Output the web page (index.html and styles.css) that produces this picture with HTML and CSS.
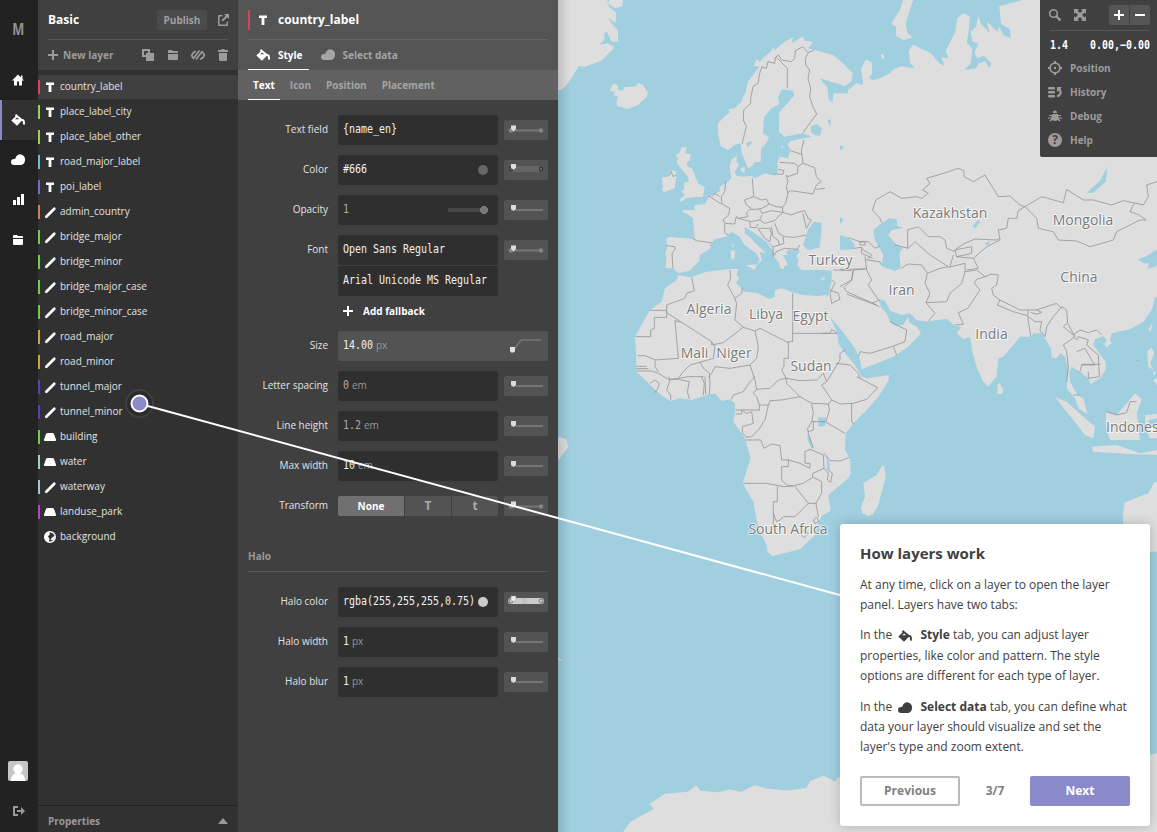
FILE: index.html
```html
<!DOCTYPE html>
<html lang="en">
<head>
<meta charset="utf-8">
<title>Basic – country_label</title>
<link rel="stylesheet" href="styles.css">
</head>
<body>
<svg class="sprite" aria-hidden="true">
  <symbol id="home" viewBox="0 0 18 18"><path d="M9 3.500 3 9.500h2v5h3v-4h2v4h3v-5h2L13.500 8V4.500H12v2z"/></symbol>
  <symbol id="paint" viewBox="0 0 18 18"><path fill-rule="evenodd" d="M7.200 3 9 4.800 13.200 8q2.500 0 2.700 3v2.500q-1.600.9-2-1V10.300L12.600 10 8 14.800 2.300 9.400 6.500 5.400 6 4.200zM6 8.300h4.200L8.200 6.400z"/></symbol>
  <symbol id="cloud" viewBox="0 0 18 18"><path d="M5 14a3 3 0 0 1 0-6q1.300 0 1.500-.7A4.700 4.700 0 0 1 16 9c0 3-2 5-5 5z"/></symbol>
  <symbol id="bars" viewBox="0 0 18 18"><path d="M4 9h3v5H4zM8 6h3v8H8zM12 3h3v11h-3z"/></symbol>
  <symbol id="folder" viewBox="0 0 18 18"><path d="M4 7V5q0-1 1-1h3l1 1h4q1 0 1 1v1zM4 8h10v5q0 1-1 1H5q-1 0-1-1z"/></symbol>
  <symbol id="logout" viewBox="0 0 18 18"><path d="M9 4H4v10h5v-2H6V6h3zM8 8h4V5l4 4-4 4v-3H8z"/></symbol>
  <symbol id="share" viewBox="0 0 18 18"><path d="M9 4H5Q4 4 4 5v9q0 1 1 1h8q1 0 1-1v-4l-1.500 1.500v2h-7v-8H8zM10 3h5v5l-1.800-1.800-4.400 4.400-1.400-1.400L11.800 4.800z"/></symbol>
  <symbol id="plus" viewBox="0 0 18 18"><path d="M8 4h2v4h4v2h-4v4H8v-4H4V8h4z"/></symbol>
  <symbol id="minus" viewBox="0 0 18 18"><path d="M4 8h10v2H4z"/></symbol>
  <symbol id="copy" viewBox="0 0 18 18"><path fill-rule="evenodd" d="M3 3h8v4h4v8H7v-4H3zM5 5v4h2V7h2V5z"/></symbol>
  <symbol id="hide" viewBox="0 0 18 18"><g fill="none" stroke="currentColor" stroke-width="1.700"><path d="M7 5.300Q3.500 6.500 2.700 9.500q.7 2 2 2.800M11 13.300q3.500-1.300 4.300-4.300-.5-1.700-1.700-2.700M10.500 4.500 4 13M13.500 5l-6.500 8.500"/></g></symbol>
  <symbol id="trash" viewBox="0 0 18 18"><path d="M4 4h3l1-1h2l1 1h3v2H4zM5 7h8v7q0 1-1 1H6q-1 0-1-1z"/></symbol>
  <symbol id="text" viewBox="0 0 18 18"><path d="M5 4.500h8V7h-2.600v7H7.600V7H5z"/></symbol>
  <symbol id="line" viewBox="0 0 18 18"><path d="M5.300 13.700 13.300 5.700" fill="none" stroke="currentColor" stroke-width="2.700" stroke-linecap="round"/></symbol>
  <symbol id="fill" viewBox="0 0 18 18"><path d="M6.500 5h5q1 0 1.500 1l2 5.500q.3 1.500-1 1.500H4q-1.300 0-1-1.500L5 6q.5-1 1.500-1z"/></symbol>
  <symbol id="globe" viewBox="0 0 18 18"><circle cx="9" cy="9" r="5.300" fill="none" stroke="currentColor" stroke-width="1.400"/><path d="M3.500 8.500 5 5l3-1.500 1 2.500-2 2.500 1.500 2.500L8 14.300Q4 13.500 3.500 8.500zM11.500 9l2.500-1-.5 3-2 1.500-2-1z"/></symbol>
  <symbol id="search" viewBox="0 0 18 18"><path d="m10 10 4.500 4.500" fill="none" stroke="currentColor" stroke-width="2.400"/><circle cx="7.500" cy="7.500" r="3.800" fill="none" stroke="currentColor" stroke-width="1.600"/></symbol>
  <symbol id="full" viewBox="0 0 18 18"><path d="M3 3h5L6.500 4.500 9 7l2.500-2.500L10 3h5v5l-1.500-1.500L11 9l2.500 2.500L15 10v5h-5l1.500-1.500L9 11l-2.500 2.500L8 15H3v-5l1.500 1.500L7 9 4.500 6.500 3 8z"/></symbol>
  <symbol id="target" viewBox="0 0 18 18"><circle cx="9" cy="9" r="4.900" fill="none" stroke="currentColor" stroke-width="1.800"/><circle cx="9" cy="9" r="1.200"/><path d="M8 2h2v3H8zM8 13h2v3H8zM2 8h3v2H2zM13 8h3v2h-3z"/></symbol>
  <symbol id="history" viewBox="0 0 18 18"><path d="M3 4h5q1 0 1 1.300T8 6.500H3q-1 0-1-1.200T3 4zM3 8h5q1 0 1 1.300t-1 1.200H3q-1 0-1-1.200T3 8zM3 12h5q1 0 1 1.300t-1 1.200H3q-1 0-1-1.200T3 12z"/><path d="M11 4h5l-1.500 1.700Q18 11 11.800 14.500l-1.200-1.700Q15 10.500 12.800 7.500L11 9z"/></symbol>
  <symbol id="bug" viewBox="0 0 18 18"><path d="M7 6a2 2.400 0 0 1 4 0zM6 7h6v1h3v1h-2.500v1.500H16v1h-3.500l2 2-1 1-2-1.500q-2.500 2-5 0l-2 1.500-1-1 2-2H2v-1h3.500V9H3V8h3z"/></symbol>
  <symbol id="fn-bar" viewBox="0 0 44 20"><path d="M7 10h32" stroke="#767676" stroke-width="2"/><path d="M7 5h5v3.500L9.500 11 7 8.500z" fill="#ddd"/></symbol>
  <symbol id="fn-dots" viewBox="0 0 44 20"><path d="M7 10.500h30" stroke="#767676" stroke-width="2"/><circle cx="7" cy="10.500" r="2.300" fill="#858585"/><circle cx="37" cy="10.500" r="2.300" fill="#858585"/><path d="M7 5.500h5V9l-2.500 2.500L7 9z" fill="#ddd"/></symbol>
</svg>

<div class="app">
  <nav class="rail">
    <div class="rail-item logo">M</div>
    <div class="rail-item first"><svg class="icon"><use href="#home"/></svg></div>
    <div class="rail-item active"><svg class="icon"><use href="#paint"/></svg></div>
    <div class="rail-item"><svg class="icon"><use href="#cloud"/></svg></div>
    <div class="rail-item"><svg class="icon"><use href="#bars"/></svg></div>
    <div class="rail-item"><svg class="icon"><use href="#folder"/></svg></div>
    <div class="rail-end">
      <svg class="avatar" viewBox="0 0 20 20"><rect width="20" height="20" rx="2" fill="#c6c6c6"/><circle cx="10" cy="8" r="4.700" fill="#fff"/><path d="M3 20q0-8 7-8t7 8z" fill="#fff"/></svg>
      <svg class="icon dim"><use href="#logout"/></svg>
    </div>
  </nav>

  <aside class="layers">
    <header class="layers-head">
      <div class="title-row"><h1>Basic</h1><button class="publish">Publish</button><svg class="icon"><use href="#share"/></svg></div>
      <div class="tool-row"><svg class="icon plus"><use href="#plus"/></svg><b>New layer</b>
        <div class="tools"><svg class="icon"><use href="#copy"/></svg><svg class="icon"><use href="#folder"/></svg><svg class="icon"><use href="#hide"/></svg><svg class="icon"><use href="#trash"/></svg></div>
      </div>
    </header>
    <ul class="layer-list">
      <li class="red selected"><svg class="icon"><use href="#text"/></svg>country_label</li>
      <li class="lime"><svg class="icon"><use href="#text"/></svg>place_label_city</li>
      <li class="lime"><svg class="icon"><use href="#text"/></svg>place_label_other</li>
      <li class="cyan"><svg class="icon"><use href="#text"/></svg>road_major_label</li>
      <li class="violet"><svg class="icon"><use href="#text"/></svg>poi_label</li>
      <li class="coral"><svg class="icon"><use href="#line"/></svg>admin_country</li>
      <li class="green"><svg class="icon"><use href="#line"/></svg>bridge_major</li>
      <li class="green"><svg class="icon"><use href="#line"/></svg>bridge_minor</li>
      <li class="green"><svg class="icon"><use href="#line"/></svg>bridge_major_case</li>
      <li class="green"><svg class="icon"><use href="#line"/></svg>bridge_minor_case</li>
      <li class="amber"><svg class="icon"><use href="#line"/></svg>road_major</li>
      <li class="amber"><svg class="icon"><use href="#line"/></svg>road_minor</li>
      <li class="indigo"><svg class="icon"><use href="#line"/></svg>tunnel_major</li>
      <li class="indigo"><svg class="icon"><use href="#line"/></svg>tunnel_minor</li>
      <li class="green"><svg class="icon"><use href="#fill"/></svg>building</li>
      <li class="mint"><svg class="icon"><use href="#fill"/></svg>water</li>
      <li class="ice"><svg class="icon"><use href="#line"/></svg>waterway</li>
      <li class="magenta"><svg class="icon"><use href="#fill"/></svg>landuse_park</li>
      <li><svg class="icon"><use href="#globe"/></svg>background</li>
    </ul>
    <footer class="properties"><b>Properties</b><i class="caret"></i></footer>
  </aside>

  <section class="panel">
    <header class="panel-head">
      <div class="panel-title"><svg class="icon"><use href="#text"/></svg><h2>country_label</h2></div>
      <div class="tabs"><b class="on"><svg class="icon"><use href="#paint"/></svg>Style</b><b><svg class="icon"><use href="#cloud"/></svg>Select data</b></div>
    </header>
    <div class="subtabs"><b class="on">Text</b><b>Icon</b><b>Position</b><b>Placement</b></div>
    <div class="form">
      <div class="row"><label>Text field</label><div class="input"><span class="mono"><i>{name_en}</i></span></div><svg class="fn"><use href="#fn-dots"/></svg></div>
      <div class="row"><label>Color</label><div class="input"><span class="mono"><i>#666</i></span><em class="swatch"></em></div>
        <svg class="fn" viewBox="0 0 44 20"><path d="M8 6h27v6H8z" fill="#666"/><path d="M5.500 7.500h3v3h-3zM35.500 7.500h3v3h-3z" fill="#666" stroke="#353535"/><path d="M7 4h5v3.500L9.500 10 7 7.500z" fill="#ddd"/></svg></div>
      <div class="row"><label>Opacity</label><div class="input faint"><span class="mono"><i>1</i></span><div class="slider"></div></div><svg class="fn"><use href="#fn-bar"/></svg></div>
      <div class="row"><label>Font</label><div class="input"><span class="mono"><i>Open Sans Regular</i></span></div><svg class="fn"><use href="#fn-dots"/></svg></div>
      <div class="row second"><label></label><div class="input"><span class="mono"><i>Arial Unicode MS Regular</i></span></div></div>
      <div class="add"><svg class="icon"><use href="#plus"/></svg><b>Add fallback</b></div>
      <div class="row"><label>Size</label><div class="input wide"><span class="mono fit" style="--n:5"><i>14.00</i></span><small>px</small>
        <svg class="curve" viewBox="0 0 44 20"><path d="M9 16 18 4h20" fill="none" stroke="#777" stroke-width="1.500"/><path d="M7 11h5v4l-1 1.500H8L7 15z" fill="#e2e2e2"/></svg></div></div>
      <div class="row"><label>Letter spacing</label><div class="input faint"><span class="mono fit" style="--n:1"><i>0</i></span><small>em</small></div><svg class="fn"><use href="#fn-bar"/></svg></div>
      <div class="row"><label>Line height</label><div class="input faint"><span class="mono fit" style="--n:3"><i>1.2</i></span><small>em</small></div><svg class="fn"><use href="#fn-bar"/></svg></div>
      <div class="row"><label>Max width</label><div class="input"><span class="mono fit" style="--n:2"><i>10</i></span><small>em</small></div><svg class="fn"><use href="#fn-bar"/></svg></div>
      <div class="row"><label>Transform</label><div class="segments"><b class="on">None</b><b class="case">T</b><b class="case">t</b></div><svg class="fn"><use href="#fn-dots"/></svg></div>
      <h3>Halo</h3>
      <div class="row"><label>Halo color</label><div class="input"><span class="mono"><i>rgba(255,255,255,0.75)</i></span><em class="swatch light"></em></div>
        <svg class="fn" viewBox="0 0 44 20"><rect x="4" y="6" width="36" height="6" rx="3" fill="#ccc"/><path d="M18 6h5v6h-5z" fill="#c2c2c2"/><circle cx="7" cy="9" r="2" fill="none" stroke="#777"/><circle cx="37" cy="9" r="2" fill="none" stroke="#777"/><path d="M7 4h5v3.500L9.500 10 7 7.500z" fill="#eee" stroke="#888" stroke-width=".5"/></svg></div>
      <div class="row"><label>Halo width</label><div class="input"><span class="mono fit" style="--n:1"><i>1</i></span><small>px</small></div><svg class="fn"><use href="#fn-bar"/></svg></div>
      <div class="row"><label>Halo blur</label><div class="input"><span class="mono fit" style="--n:1"><i>1</i></span><small>px</small></div><svg class="fn"><use href="#fn-bar"/></svg></div>
    </div>
  </section>

  <main class="map">
    <svg class="world" viewBox="558 0 599 832">
      <!-- Arctic coast and southern land -->
      <g transform="translate(558 0) scale(.38202 .53061)" class="land">
        <path d="M700 215 735 208 760 185 785 165 800 160 793 130 805 112 822 118 822 140 808 152 835 150 865 140 880 130 900 125 925 128 935 127 922 120 918 95 930 84 950 92 975 100 1000 120 1012 124 1003 108 1022 110 1015 95 1040 60 1045 35 1060 25 1078 30 1075 60 1070 80 1085 92 1080 120 1065 130 1050 155 1075 158 1090 135 1100 120 1120 115 1128 130 1135 120 1115 105 1098 110 1090 100 1100 82 1085 78 1080 60 1095 50 1100 30 1108 45 1130 62 1122 40 1150 60 1155 50 1165 66 1185 72 1183 55 1160 45 1155 12 1215 0H1568V560H700z"/>
        <path d="M903 0 895 20 880 35 872 45 885 50 885 68 905 76 928 70 915 62 910 45 918 25 930 0zM845 104 850 101 855 108 848 112z"/>
        <path d="M170 1568 190 1548 250 1525 240 1515 280 1496 340 1492 362 1480 372 1490 415 1493 450 1488 480 1492 515 1480 545 1486 600 1490 650 1485 660 1472 695 1462 725 1473 735 1464 760 1480V1568zM760 1400H1568V1568H760zM1479 970 1483 947 1525 935 1545 930 1560 910 1568 908V1040H1479zM0 823 22 828 27 843 0 868zM0 1240 15 1245 0 1244z"/>
      </g>
      <path class="water" d="M1149 690h8v63l-8 2z"/>
      <!-- Europe and the North Atlantic -->
      <g transform="translate(558 0) scale(.33333)">
        <g class="land">
          <path d="M0 0H195L193 18 172 25 148 10 155 0H148L152 20 175 38 172 68 147 50 143 35 160 70 175 85 180 95V125H160L148 97H140L138 120 125 134 150 130 170 142 130 182 80 200 63 198 30 250 10 270H0z"/>
          <path d="M165 252 180 255 180 270 195 272 198 262 235 258 240 248 255 255 270 278 265 292 240 315 208 327 178 318 175 310 180 290 165 285 172 275 155 272z"/>
          <path d="M370 442 387 442 382 460 399 463 395 480 385 492 390 500 402 505 420 550 440 562 435 590 405 592 385 595 370 605 362 600 375 590 382 585 370 575 378 568 378 548 392 545 390 530 378 515 365 500 355 485 360 478 353 465 365 458zM335 512 352 513 355 525 350 565 318 577 312 570 315 560 312 532 330 530z"/>
          <path d="M325 715 335 711 410 717 405 655 385 640 373 637 375 630 410 630 410 615 440 612 455 588 485 575 485 560 510 545 520 535 515 500 520 480 537 467 535 485 543 495 530 515 535 527 555 530 580 527 590 535 620 520 650 527 660 515 658 490 665 470 690 475 697 450 688 432 700 422 760 410 735 400 680 410 663 395V340L670 330 708 287 705 272 672 268 660 292 665 312 640 325 618 352 615 400 633 412 625 430 610 445 608 485 590 487 575 505 568 500 550 455 548 430 530 435 510 450 488 438 480 400V370L498 352 515 337 512 328 530 325 550 305 555 290 562 280 570 245 592 215 605 200 588 198 595 178 605 185 615 175 640 153 645 140 650 150 680 125 705 112 700 130 718 120 735 108 740 122 765 125 750 145 790 155 825 165 855 190 885 220 880 245 860 258 785 235 808 262 812 300 845 318 850 305 835 292 868 300 870 270 895 250 915 255 918 190 942 192 940 215 925 230 945 240 1300 200V850H920L830 810 800 818 735 815 718 795 722 780 715 768 725 755 720 745 700 750 690 750 685 755 690 765 675 765 690 795 680 797 677 808 667 805 663 790 648 770 650 760 625 725 590 700 575 690 560 680 560 700 580 715 592 730 625 760 605 755 612 780 597 795 605 780 595 760 560 735 545 710 520 695 505 710 470 718 455 735 458 745 425 765 425 782 395 812 362 820 345 805 322 805 325 775 322 760 328 740z"/>
          <path d="M563 796 597 793 590 810zM518 752 530 750 530 775 520 780zM525 725 528 740 523 742zM548 505 560 500 560 517 550 515zM785 836 803 831 795 840zM672 435 677 445 670 445z"/>
        </g>
        <g class="water">
          <path d="M735 735 745 705 750 690 768 665 790 668 795 690 810 697 825 685 818 675 855 655 850 680 838 690 870 715 890 740 860 748 800 737 765 748 750 750zM760 378 775 372 792 385 785 408 770 405 758 395zM808 360 822 358 832 378 820 388zM845 438 852 435 858 445 850 452zM565 430 578 422 582 430 568 442zM945 695 960 678 980 680 980 720 960 715z"/>
        </g>
        <path class="land" d="M790 680 805 670 818 682 805 697z"/>
        <g class="border">
          <path d="M552 432 560 400 565 380 556 360 557 330 578 310 578 295 585 260 600 250 605 220 612 200 625 205 630 185 650 190 652 172 662 165 670 180 690 183 700 185 710 175 712 152 735 140 750 158 768 150M655 172 688 205 688 265M750 160 742 175 743 195 755 210 750 235 758 265 755 290 765 320 776 342 735 398"/>
          <path d="M738 420 730 450 735 490 720 500 710 490 665 487M697 452 730 463M650 522 675 523 678 512 662 508M720 500 718 520 690 530 685 525 690 545 685 560 690 580 683 610 673 622M735 490 770 503 775 530 790 545 775 555 765 582 700 572 688 578M775 568 803 565 808 585 835 598 870 612 872 630 855 650M583 535 587 588M587 590 560 600 565 615 580 625M587 590 610 600 625 597 633 612 612 625 595 628 575 628 565 640 570 650 540 655 535 648M633 612 655 620 673 622 675 637 640 632 612 640 605 628M675 637 665 645 650 662 620 670 605 660 612 645M540 655 560 660 580 665 605 660M675 637 700 645 720 637 740 632 750 655 760 660 745 685 735 640M650 670 662 700 680 710 710 712 745 705M575 665 577 682 595 683 600 672M600 685 620 715 635 725 640 700 635 685 603 685M640 680 645 710 660 720 665 735 645 740 635 730M665 735 678 730 675 710M650 765 655 755 680 745 718 748 725 735M645 740 645 770M503 545 500 575 490 590 492 612 515 625 512 645 495 660 500 670 530 672 535 650M452 588 490 612M462 590 470 580 485 590M500 672 500 698 510 705M405 715 415 722 460 728M325 737 350 740 352 747 342 760 345 805M332 528 340 515 345 530 355 525M832 678V690M800 680 815 672"/>
          <path d="M870 715 915 720 940 735 960 730M885 742 905 742 915 755 945 760M905 727H920V735H905zM910 755 915 770 945 780 960 770M830 810 885 810 882 840 822 872M885 808 925 805 920 780 945 782M925 805 940 830 935 850 960 890M822 855 828 875 820 900M838 880 855 860 890 875 915 900M945 640 950 600 960 598"/>
        </g>
      </g>
      <!-- Asia -->
      <g transform="translate(840 140) scale(.33333)">
        <g class="land">
          <path d="M-20 -140H960V375L935 400 910 415 942 438 943 480 935 510 910 545 870 568 815 580 810 600 815 608 800 623 793 612 800 600 790 588 765 598 760 615 785 650 797 665 797 690 780 715 752 733 745 715 720 695 695 680 688 700 690 725 712 765 730 775 742 822 715 805 705 775 680 745 685 690 675 650 660 640 650 655 635 652 633 625 605 580 580 580 572 590 540 590 520 615 490 650 475 655 470 710 443 740 428 722 410 680 398 640 390 590 370 598 350 578 365 562 345 557 320 537 290 540 260 545 230 540 210 520 185 525 150 512 135 482 115 478 122 500 140 520 150 545 165 557 190 555 205 530 208 548 230 560 243 580 205 620 160 650 65 688 60 660 45 625 0 565 -30 530 -60 480 -70 430z"/>
          <path d="M473 735 478 728 490 748 485 763 472 762zM645 772 680 785 730 830 765 860 760 895 735 885 700 840zM925 570 938 545 933 575zM922 632 935 623 943 640 930 670 940 690 925 680zM798 815 830 825 860 790 885 760 905 778 890 820 895 850 900 900H810L798 860zM915 825 951 822V835L925 840 930 860 951 870V895H930L915 860zM755 920 830 915 900 940 951 930 951 945 870 942 760 935z"/>
          <path d="M950 700 940 705 940 692zM940 720 951 715V735z"/>
        </g>
        <g class="water">
          <path d="M942 333 920 348 893 358 910 370 928 370 922 387 945 380 960 370V325zM803 78 797 125 760 158 740 158 780 122zM100 270 125 250 148 235 170 238 172 258 190 263 155 270 145 285 165 310 188 325 178 340 182 385 165 393 125 378 130 345 105 300zM398 258 415 240 420 245 405 265zM435 310 450 303 448 313 438 315zM0 232 10 238 5 250 0 250zM0 15 12 22 5 30 0 28zM0 285 25 293 45 315 40 328 0 330zM765 790 780 860 790 900 770 860z"/>
        </g>
        <g class="border">
          <path d="M125 248 120 235 97 210 108 180 150 155 185 175 230 170 245 175 265 160 248 150 270 130 260 115 310 100 355 85 372 92 372 110 400 125 435 105 475 170 510 168 540 195 555 200 535 212 530 235 505 235 500 265 475 270 480 300 440 320 400 355 350 350 345 330 370 312 405 297 470 300 478 295M203 325V270L235 260 265 290 300 290 315 300 320 325 345 335M183 385 205 372 245 375 262 400 300 385 325 380 270 345 225 305 205 325 165 315M325 382 375 370 375 395 365 430 330 460 320 485 258 488 270 460 255 430 262 400M340 345 330 380M345 330 395 320 395 340 350 350M400 355 415 385 380 390M258 488 285 520 265 543M375 395 410 390 435 410 410 418 403 430 420 450 383 505 355 518 370 553 345 555M435 410 455 402 475 405 470 435 455 445 460 465 480 480 540 510 590 510 605 517 590 523 572 517M480 480 472 495 520 515 563 527 565 510M563 527 565 545 573 590M565 530 585 545 605 545 600 570 615 590 620 560 640 530 665 500 680 510 683 550 705 590 670 615 680 635 685 680 680 725M590 510 650 490 665 505M680 550 670 560 700 585 720 570 745 578 770 570 785 585M700 590 710 600 715 590 745 600 740 615 775 645 778 710 745 715 745 695M710 635 735 625 755 660 765 675 725 675 720 695M725 673H780M555 200 605 170 670 188 680 148 730 180 760 180 815 195 850 182 910 195 925 170 920 135 951 125M883 190 870 215 898 225 918 240 900 240 830 275 820 300 750 320 710 303 655 300 640 275 595 265 590 235 555 200M55 650 60 635 90 640 155 620 195 605 200 570 150 545M160 620 170 645M25 293 60 305 85 305 105 325 120 318M60 305H75V315H60zM40 325 65 322 70 330 95 345 80 360 120 365 125 375M65 325 65 340 98 355M75 350 80 390 95 420 85 435 115 480M0 388 80 387M40 390 35 420 0 440M0 455 95 490 120 480M95 490 118 500M700 765H718M798 815 830 825 860 818 870 785 890 785M890 660 895 663M0 640 45 680 60 710M45 700 113 743 80 775 0 795M40 795 35 840"/>
        </g>
      </g>
      <!-- Africa -->
      <g transform="translate(600 250) scale(.33333)">
        <path class="water" d="M560 60 670 60 695 62 695 90 685 135 680 165 640 165z"/>
        <path class="land" d="M660 87 672 81 677 84 668 91z"/>
        <path class="land" d="M235 75 272 82 320 65 390 57 415 57 410 75 417 85 408 100 425 115 430 125 470 128 510 148 523 140 525 120 545 115 580 128 610 135 655 138 680 134 688 155 690 178 673 177 690 200 712 250 715 280 735 310 765 345 785 380 800 385 867 375 865 392 835 440 800 480 762 518 737 550 735 600 750 625 752 670 745 685 685 735 692 782 665 798 655 820 645 855 600 898 518 918 502 905 500 885 478 840 468 800 460 755 428 700 452 625 435 565 400 515 405 485 405 460 390 448 365 453 347 432 325 432 300 442 275 450 240 445 212 453 190 440 150 405 130 385 110 365 108 310 105 260 150 180 185 155 195 115 230 90z"/>
        <path class="land" d="M688 135 700 128 740 120 740 190 700 190 695 165 692 178z"/>
        <path class="land" d="M848 645 853 648 857 680 835 765 820 792 805 798 787 790 783 770 795 740 790 700 830 675z"/>
        <path class="water" d="M655 502 678 503 675 528 655 530zM623 550 640 595 635 595 623 570zM680 612 688 640 690 660 682 655z"/>
        <g class="border">
          <path d="M275 83 283 122 260 130 255 145 200 165 200 188 335 275 335 285 370 278 430 232 405 210 410 160 402 140 383 105 392 85 390 60M430 232 465 243 480 235 565 278 565 275H578V130M427 112 425 130 405 145M150 181H200V202H163V235L152 240V260H107M242 217 225 212 235 325 165 330 135 317H112M335 275 345 290 340 325 300 337 270 345 250 365 235 385 210 388 205 380M465 243 475 290 470 325 450 345 390 355 345 350 335 370 325 380M578 250H712M712 250 695 238 690 250H668M565 278V325H552V350L545 360 558 385 600 392 650 390 670 370 680 395 720 330 720 310 735 300M708 340 750 345 775 370 780 385M770 380 833 413 800 448 760 460 720 462 695 450 665 405 680 395M755 460V515L762 522M558 385 535 390 510 415 470 418 465 390 450 345M558 385 560 400 600 440 635 460 685 462 695 450M600 440 545 450 510 452 505 465 478 465 470 440 460 430 470 418M395 448 400 435 430 425 450 395 465 380M478 480H407M478 465 478 482M407 492H425V480M425 480 440 490 455 485 460 520 427 530V550L440 560M505 465 495 510 475 540 455 560 437 562M437 570 482 570 492 595 515 582 540 587 545 630H565L600 640 630 655 630 640 615 640V605L630 598 670 615 672 655M635 462 640 490 635 515H675L735 550M685 462 688 480 678 515M635 515 623 535 625 550 640 595M640 515V540L625 545M672 610 690 632 720 633 748 622M672 655 638 670 638 682 610 700 580 708 560 705 545 690V650H565V628M672 655 685 670 682 690 692 697 697 670 680 655M640 682 665 695V730L648 760 625 760 585 710M648 760 655 800M430 700H500L550 710 580 708M532 710V755H520V830M625 760 585 800 550 800 540 810 530 815 520 790M640 810 650 802 657 815 645 820zM600 850 612 840 625 850 612 863zM110 349H140M110 356H145M110 363H155L175 370 200 385 210 390 200 420 212 435 212 450M165 332V350L175 365M150 400 165 390 178 400 172 420 162 428M210 388 235 388 268 395 262 425 268 447M265 380H310M300 335 310 355 330 370M305 380 313 400 310 435M315 380 317 432M328 370 330 400 328 432M235 385 265 380M700 60 755 62M697 90 705 98 690 130 695 160 720 148 715 130 690 120M730 110 740 125 830 165M735 110 755 90 760 60 795 57"/>
        </g>
      </g>
      <g class="places">
        <text x="950" y="218">Kazakhstan</text><text x="1083" y="225">Mongolia</text><text x="1079" y="282">China</text><text x="830.500" y="265">Turkey</text><text x="901.500" y="295">Iran</text><text x="709" y="314">Algeria</text><text x="766" y="319">Libya</text><text x="810.500" y="321">Egypt</text><text x="694.500" y="358">Mali</text><text x="734" y="358">Niger</text><text x="811" y="371">Sudan</text><text x="991.500" y="339">India</text><text x="788" y="534">South Africa</text><text x="1106" y="432" class="start">Indones</text>
      </g>
    </svg>

    <div class="controls">
      <div class="control-top"><svg class="icon"><use href="#search"/></svg><svg class="icon"><use href="#full"/></svg>
        <div class="zoom"><span><svg class="icon"><use href="#plus"/></svg></span><span><svg class="icon"><use href="#minus"/></svg></span></div></div>
      <div class="coords"><span class="mono fit" style="--n:3"><i>1.4</i></span><span class="mono fit" style="--n:10"><i>0.00,−0.00</i></span></div>
      <div class="control"><svg class="icon"><use href="#target"/></svg>Position</div>
      <div class="control"><svg class="icon"><use href="#history"/></svg>History</div>
      <div class="control"><svg class="icon"><use href="#bug"/></svg>Debug</div>
      <div class="control"><span class="help">?</span>Help</div>
    </div>
  </main>
</div>

<svg class="pointer" viewBox="0 0 1157 832"><circle cx="139.500" cy="403.500" r="13.500" fill="#2b2b2b" stroke="#3f3f3f" stroke-width="2"/><path d="M146 405.500 845 596.500" stroke="#fff" stroke-width="2"/><circle cx="139.500" cy="403.500" r="8" fill="#8a8aca" stroke="#fff" stroke-width="2"/></svg>

<div class="tour">
  <h2>How layers work</h2>
  <p>At any time, click on a layer to open the layer panel. Layers have two tabs:</p>
  <p>In the <svg class="icon"><use href="#paint"/></svg> <b>Style</b> tab, you can adjust layer properties, like color and pattern. The style options are different for each type of layer.</p>
  <p>In the <svg class="icon"><use href="#cloud"/></svg> <b>Select data</b> tab, you can define what data your layer should visualize and set the layer's type and zoom extent.</p>
  <div class="tour-nav"><button class="prev">Previous</button><b>3/7</b><button class="next">Next</button></div>
</div>
</body>
</html>
```
FILE: styles.css
```css
* { box-sizing: border-box; }
body { margin: 0; width: 1157px; height: 832px; overflow: hidden; position: relative; font: 10px/20px "Open Sans", "Noto Sans", sans-serif; color: #e2e2e2; background: #404040; }
h1, h2, h3, p, ul { margin: 0; padding: 0; }
button { font: inherit; font-weight: 700; padding: 0; border: 0; }
.sprite { position: absolute; width: 0; height: 0; }
.icon { width: 18px; height: 18px; fill: currentColor; flex: none; display: block; }
.app { display: flex; height: 832px; }

.rail { width: 38px; background: #222; color: #fff; display: flex; flex-direction: column; }
.rail-item { height: 40px; padding-right: 2px; display: flex; align-items: center; justify-content: center; }
.rail-item.logo { height: 60px; padding-bottom: 2px; color: #929292; font: 700 16px/58px "Noto Sans", sans-serif; transform: scaleX(.8); }
.rail-item.active { background: #313131; border-left: 2px solid #8a8aca; padding-right: 4px; }
.rail-end { margin-top: auto; padding: 0 0 12px 8px; display: flex; flex-direction: column; gap: 21px; }
.rail-end .icon { margin-left: 1px; }
.avatar { width: 20px; height: 20px; display: block; }
.dim { color: #999; }

.layers { width: 200px; background: #313131; display: flex; flex-direction: column; }
.layers-head { height: 70px; background: #404040; padding: 0 10px; color: #9c9c9c; }
.title-row { height: 40px; border-bottom: 1px solid #565656; display: flex; align-items: center; }
.title-row h1 { font-size: 12px; color: #fff; flex: 1; }
.title-row .icon { margin-right: -4px; }
.publish { width: 50px; height: 20px; background: #4b4b4b; color: #a0a0a0; border-radius: 2px; margin: 1px 7px 0 0; line-height: 20px; }
.tool-row { height: 30px; display: flex; align-items: center; }
.tool-row b { padding-bottom: 1px; }
.tool-row .plus { margin: 0 1px 0 -4px; }
.tools { display: flex; gap: 7px; margin: 0 -4px 0 auto; }
.layer-list { list-style: none; margin-top: 5px; flex: 1; }
.layer-list li { height: 25px; padding: 0 0 3px 3px; display: flex; align-items: center; gap: 1px; background: linear-gradient(var(--c), var(--c)) 0 5px / 2px 14px no-repeat; --c: transparent; }
.layer-list .icon { color: #fff; margin-top: 2px; }
.layer-list .selected { box-shadow: inset 0 -1px #313131; background-color: #404040; }
.layer-list .red { --c: #d84550; } .layer-list .lime { --c: #a8cc56; } .layer-list .cyan { --c: #70bccc; }
.layer-list .violet { --c: #7768ce; } .layer-list .coral { --c: #cd7d64; } .layer-list .green { --c: #70cc4d; }
.layer-list .amber { --c: #cea33e; } .layer-list .indigo { --c: #5541bd; } .layer-list .mint { --c: #a2cfbf; }
.layer-list .ice { --c: #a2c9d0; } .layer-list .magenta { --c: #b347cc; }
.properties { height: 27px; padding: 5px 10px 0; border-top: 1px solid #222; color: #999; display: flex; align-items: center; justify-content: space-between; }
.properties b { padding-bottom: 2px; }
.caret { border: 5px solid transparent; border-top: 0; border-bottom: 6px solid #999; margin-bottom: 1px; }

.panel { width: 320px; background: #404040; }
.panel-head { height: 70px; background: #545454; padding: 0 10px; }
.panel-title { height: 40px; border-bottom: 1px solid #676767; display: flex; align-items: center; gap: 6px; padding-left: 6px; color: #fff; background: linear-gradient(#d84550, #d84550) 0 10px / 2px 20px no-repeat; }
.panel-title h2 { font-size: 12px; }
.tabs { display: flex; height: 30px; color: #a5a5a5; }
.tabs b { display: flex; align-items: center; gap: 6px; padding: 1px 6px 0; height: 30px; border-bottom: 1px solid transparent; }
.on { color: #fff; }
.tabs .on, .subtabs .on { border-bottom: 1px solid #fff; }
.tabs b + b { padding-left: 10px; }
.subtabs { height: 30px; background: #616161; color: #a5a5a5; display: flex; padding: 0 10px; }
.subtabs b { padding: 0 5px; height: 30px; line-height: 30px; margin-right: 5px; }
.form { padding: 15px 10px 0; }
.row { display: flex; height: 30px; margin-bottom: 10px; align-items: center; }
.row label { width: 80px; text-align: right; margin-right: 10px; padding-bottom: 2px; }
.row.second { margin-top: -9px; margin-bottom: 5px; }
.input { width: 160px; height: 30px; border-radius: 2px; background: #2f2f2f; padding: 0 5px; display: flex; align-items: center; color: #f2f2f2; }
.input.faint { color: #aaa; }
.input.wide { width: 210px; background: #535353; padding-right: 1px; }
.input small { font-size: 10px; color: #989898; margin-left: 3px; padding-bottom: 2px; flex: none; }
.mono { font: 12px/20px "DejaVu Sans Mono", monospace; white-space: pre; display: block; }
.input .mono { padding-bottom: 2px; }
.mono i { font-style: normal; display: inline-block; transform: scaleX(.831); transform-origin: left; }
.mono.fit { width: calc(var(--n) * 6px); }
.fn { width: 44px; height: 20px; border-radius: 2px; background: #535353; margin-left: 6px; flex: none; }
.swatch { width: 10px; height: 10px; border-radius: 50%; background: #666; margin: 0 5px 0 auto; flex: none; }
.swatch.light { background: #ccc; margin-left: -24px; }
.slider { width: 40px; height: 8px; margin: 0 5px 0 auto; background: radial-gradient(circle, #777 4px, transparent 4px) right center / 8px 8px no-repeat, linear-gradient(#464646, #464646) center / 100% 4px no-repeat; }
.curve { width: 44px; height: 20px; margin-left: auto; margin-top: -1px; }
.add { height: 20px; display: flex; align-items: center; gap: 6px; padding-left: 91px; margin-bottom: 10px; color: #fff; }
.segments { width: 160px; height: 20px; display: flex; gap: 1px; border-radius: 2px; overflow: hidden; text-align: center; color: #aaa; }
.segments b { flex: 46; background: #535353; }
.segments .case { font-size: 12px; }
.segments b.on { flex: 66; background: #707070; color: #fff; }
h3 { font-size: 10px; line-height: 20px; color: #999; height: 41px; border-bottom: 1px solid #565656; margin-bottom: 15px; padding-top: 15px; }

.map { width: 599px; background: #a0cfdf; position: relative; }
.map::before { content: ""; position: absolute; inset: 0 auto 0 0; width: 12px; background: linear-gradient(90deg, #0002, #0000); }
.world { display: block; width: 599px; height: 832px; }
.land { fill: #dedede; }
.water { fill: #a0cfdf; }
.border path { fill: none; stroke: #939393; stroke-width: .8px; vector-effect: non-scaling-stroke; stroke-linejoin: round; }
.places text { font-size: 14px; fill: #7a7a7a; stroke: #ffffffb0; stroke-width: 2px; paint-order: stroke; text-anchor: middle; }
.places .start { text-anchor: start; }

.controls { position: absolute; top: 0; right: 0; width: 117px; height: 157px; background: #404040; border-radius: 0 0 0 2px; padding: 5px 7px 0 10px; color: #9c9c9c; font-weight: 700; }
.control-top { height: 26px; border-bottom: 1px solid #565656; display: flex; gap: 7px; padding-bottom: 5px; align-items: center; }
.control-top > .icon:first-child { margin-left: -4px; }
.zoom { margin-left: auto; display: flex; gap: 1px; color: #fff; border-radius: 2px; overflow: hidden; }
.zoom span { width: 20px; height: 20px; background: #555; display: flex; align-items: center; justify-content: center; }
.coords { display: flex; justify-content: space-between; color: #fff; padding: 4px 0 1px; }
.coords .mono { font-weight: 700; }
.control { height: 24px; display: flex; align-items: center; gap: 6px; margin-left: -4px; }
.help { width: 14px; height: 14px; margin: 0 2px; border-radius: 50%; background: #9c9c9c; color: #404040; font-size: 12px; line-height: 14px; text-align: center; }

.pointer { position: absolute; left: 0; top: 0; width: 1157px; height: 832px; pointer-events: none; }

.tour { position: absolute; left: 840px; top: 524px; width: 310px; height: 302px; border-radius: 3px; background: #fff; color: #404040; padding: 19px 20px; box-shadow: 0 0 12px #0003; font-size: 12px; line-height: 20.400px; }
.tour h2 { font-size: 15px; line-height: 20px; margin-bottom: 11.500px; }
.tour p { margin-bottom: 10px; }
.tour .icon { display: inline-block; vertical-align: -3px; margin: -3px 3px -3px 1px; }
.tour-nav { display: flex; align-items: center; justify-content: space-between; margin-top: 18.500px; color: #808080; }
.tour-nav button { width: 100px; height: 30px; border-radius: 2px; }
.tour-nav .prev { background: #fff; border: 2px solid #bbb; color: #808080; }
.next { background: #8a8aca; color: #fff; }
```
